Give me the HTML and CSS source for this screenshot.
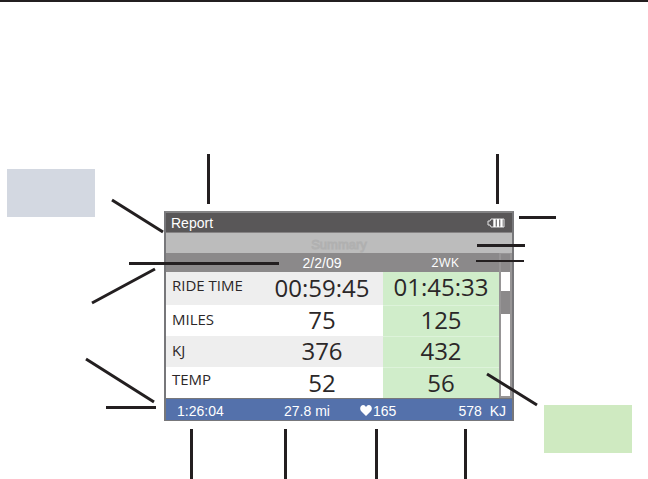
FILE: index.html
```
<!DOCTYPE html>
<html lang="en">
<head>
<meta charset="utf-8">
<title>Report</title>
<link rel="stylesheet" href="styles.css">
</head>
<body>
<hr class="rule">
<main class="figure">
  <div class="swatch swatch-blue"></div>
  <section class="screen">
    <header class="titlebar">
      <h1>Report</h1>
      <svg class="battery" viewBox="0 0 18 10" width="18" height="10" role="img" aria-label="Battery full">
        <path d="M4 1H17V9H4L3 7H1V3H3Z" fill="none" stroke="#e4e4e4"/>
        <path d="M7.500 1V9M11 1V9M14.500 1V9" fill="none" stroke="#fff" stroke-width="2.400"/>
      </svg>
    </header>
    <h2 class="summary">Summary</h2>
    <div class="report">
      <table>
        <thead>
          <tr><td></td><th class="date" scope="col">2/2/09</th><th class="period" scope="col">2WK</th></tr>
        </thead>
        <tbody>
          <tr class="raised"><th scope="row">RIDE TIME</th><td>00:59:45</td><td class="total">01:45:33</td></tr>
          <tr><th scope="row">MILES</th><td>75</td><td class="total">125</td></tr>
          <tr><th scope="row">KJ</th><td>376</td><td class="total">432</td></tr>
          <tr class="raised"><th scope="row">TEMP</th><td>52</td><td class="total">56</td></tr>
        </tbody>
      </table>
      <div class="scrollbar"><div class="thumb"></div></div>
    </div>
    <footer class="status">
      <span>1:26:04</span>
      <span>27.8 mi</span>
      <span class="heart"><svg viewBox="0 0 12 11" width="12" height="11" aria-hidden="true"><path d="M6 11L1 6C-1 3 1 0 3.2 0Q5 0 6 2Q7 0 8.8 0C11 0 13 3 11 6Z" fill="#fff"/></svg>165</span>
      <span class="energy">578&nbsp; KJ</span>
    </footer>
  </section>
  <div class="swatch swatch-green"></div>
  <svg class="callouts" viewBox="0 0 648 477" preserveAspectRatio="none" aria-hidden="true">
    <path d="M208.500 152V202M497.500 152V202M519 215.500H556M477 243.500H525M112 198L163 230M129 261.500H279M92 301L155 267M86 357L154 400M106 405.500H156M191.500 427V477M285.500 427V477M376.500 427V477M465.500 427V477M487 372L537 403"/>
    <path class="thin" d="M476 259H524"/>
  </svg>
</main>
</body>
</html>
```
FILE: styles.css
```
* {
  box-sizing: border-box;
}

body {
  margin: 0;
  background: #fff;
  color: #2b2728;
  font-family: "Liberation Sans", Arial, sans-serif;
  font-size: 14px;
}

.rule {
  height: 2px;
  margin: 0;
  border: 0;
  background: #231f20;
}

.figure {
  position: relative;
  display: grid;
  grid-template-columns: 164fr 350fr 134fr;
  align-items: start;
  padding: 167px 0 26px;
}

.swatch {
  width: 88px;
  height: 48px;
}

.swatch-blue {
  margin-left: 7px;
  background: #d3d8e1;
}

.swatch-green {
  align-self: end;
  justify-self: end;
  margin-right: 16px;
  background: #cfeac1;
}

.screen {
  margin: 42px 0 32px;
  border: 2px solid #77777a;
  border-top-color: #838384;
  border-bottom-width: 1px;
}

.titlebar {
  display: flex;
  align-items: center;
  justify-content: space-between;
  height: 20px;
  padding: 0 7px 0 5px;
  border-bottom: 1px solid #858384;
  background: #595758;
}

h1,
h2 {
  margin: 0;
  font-size: 14px;
  font-weight: 400;
}

h1 {
  color: #fff;
}

.battery {
  display: block;
}

.summary {
  height: 20px;
  padding-top: 2px;
  background: #bcbcbc;
  color: #bcbcbc;
  font-size: 13px;
  line-height: 20px;
  text-align: center;
  -webkit-text-stroke: 1px #b0b0b0;
}

.report {
  display: flex;
  background: #8b898a;
}

table {
  flex: 1;
  border-collapse: collapse;
  table-layout: fixed;
}

th,
td {
  padding: 0;
  font-weight: 400;
}

thead tr {
  height: 19px;
  color: #fff;
}

.date {
  width: 122px;
}

.period {
  width: 116px;
  padding-left: 8px;
  font-family: "Open Sans", sans-serif;
  font-size: 13px;
  font-weight: 500;
  line-height: 19px;
}

tbody {
  background: #fff;
  font-family: "Open Sans", sans-serif;
}

tbody tr {
  height: 31px;
}

tbody tr:first-child {
  height: 33px;
}

tbody tr:nth-child(odd) {
  background: #eee;
}

tbody th {
  padding: 0 0 4px 6px;
  font-size: 15px;
  line-height: 20px;
  text-align: left;
  white-space: nowrap;
}

tbody td {
  padding-bottom: 2px;
  font-size: 24px;
  line-height: 28px;
  text-align: center;
}

.raised th {
  padding-bottom: 8px;
}

tr:last-child td {
  padding-bottom: 0;
}

.total {
  border-bottom: 1px solid #ddf3da;
  background: #d0edca;
}

tr:last-child .total {
  border-bottom: 0;
}

.scrollbar {
  width: 13px;
  padding-top: 37px;
  border: 2px solid #979596;
  border-width: 1px 2px 2px;
  background: linear-gradient(#8b898a 18px, #fff 18px);
}

.thumb {
  height: 23px;
  background: #8b898a;
}

.status {
  display: grid;
  grid-template-columns: 107fr 76fr 71fr 81fr;
  align-items: center;
  height: 22px;
  padding: 2px 0 0 11px;
  border-top: 1px solid #77777a;
  background: #5471ab;
  color: #fff;
  white-space: nowrap;
}

.heart {
  display: flex;
  align-items: center;
  gap: 1px;
}

.energy {
  padding-right: 6px;
  text-align: right;
}

.callouts {
  position: absolute;
  inset: 0;
  width: 100%;
  height: 100%;
  fill: none;
  stroke: #231f20;
  stroke-width: 3px;
  pointer-events: none;
}

.thin {
  stroke-width: 2px;
}
```
